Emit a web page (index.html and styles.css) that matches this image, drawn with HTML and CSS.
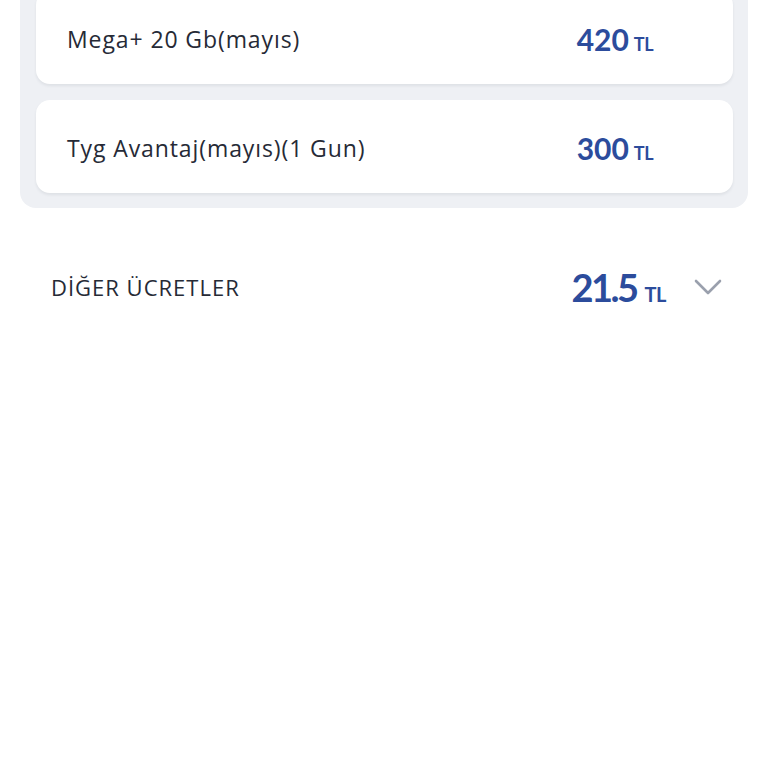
FILE: index.html
```html
<!DOCTYPE html>
<html lang="tr">
<head>
    <meta charset="UTF-8">
    <title>Ücretler</title>
    <link rel="stylesheet" href="styles.css">
</head>
<body>
    <div class="panel">
        <div class="card">
            <span class="name">Mega+ 20 Gb(mayıs)</span>
            <span class="price">420<small>TL</small></span>
        </div>
        <div class="card">
            <span class="name">Tyg Avantaj(mayıs)(1 Gun)</span>
            <span class="price">300<small>TL</small></span>
        </div>
    </div>
    <div class="other">
        <span class="other-title">DİĞER ÜCRETLER</span>
        <span class="other-right">
            <span class="price big">21.5<small>TL</small></span>
            <svg class="chevron" width="28" height="18" viewBox="0 0 28 18">
                <path d="M2 3 L14 15 L26 3" fill="none" stroke="#9aa0ad" stroke-width="2.6" stroke-linecap="round" stroke-linejoin="round"/>
            </svg>
        </span>
    </div>
</body>
</html>
```

FILE: styles.css
```css
* {
    box-sizing: border-box;
}

body {
    margin: 0;
    font-family: "Open Sans", "Noto Sans", sans-serif;
    background-color: #fff;
    color: #262a36;
}

.panel {
    margin: -25px 20px 0;
    padding: 16px 15px 15px 16px;
    background-color: #eef0f4;
    border-radius: 16px;
    display: flex;
    flex-direction: column;
    gap: 16px;
}

.card {
    height: 93px;
    background-color: #fff;
    border-radius: 14px;
    box-shadow: 0 2px 3px rgba(40, 50, 70, 0.08);
    display: flex;
    align-items: center;
    justify-content: space-between;
    padding: 2px 80px 0 31px;
}

.name {
    font-size: 23px;
    font-weight: 500;
    letter-spacing: 0.9px;
}

.price {
    font-family: Lato, "Open Sans", sans-serif;
    color: #2c4c9c;
    font-size: 30px;
    font-weight: 700;
    display: flex;
    align-items: baseline;
}

.price small {
    font-size: 18px;
    font-weight: 700;
    margin-left: 5px;
    letter-spacing: -0.5px;
}

.other {
    margin-top: 50px;
    height: 58px;
    display: flex;
    align-items: center;
    justify-content: space-between;
    padding: 0 46px 0 51px;
}

.other-title {
    font-size: 22px;
    font-weight: 500;
    letter-spacing: 1px;
}

.other-right {
    display: flex;
    align-items: center;
    gap: 28px;
}

.price.big {
    font-size: 38px;
    letter-spacing: -2.5px;
}

.price.big small {
    font-size: 20px;
    letter-spacing: -0.5px;
    margin-left: 8px;
}
```
